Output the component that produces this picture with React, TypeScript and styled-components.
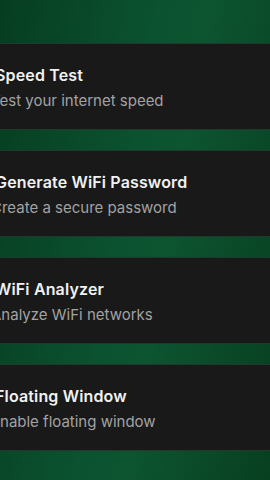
import React, { FC } from "react";
import styled, { createGlobalStyle } from "styled-components";

const GlobalStyle = createGlobalStyle`
  html, body {
    margin: 0;
    padding: 0;
    height: 100%;
  }
  body {
    font-family: Inter, "Noto Sans", "Liberation Sans", sans-serif;
    background: #0a4a27;
    overflow: hidden;
  }
  #root {
    height: 100%;
  }
`;

const tools = [
  { title: "Speed Test", subtitle: "Test your internet speed" },
  { title: "Generate WiFi Password", subtitle: "Create a secure password" },
  { title: "WiFi Analyzer", subtitle: "Analyze WiFi networks" },
  { title: "Floating Window", subtitle: "Enable floating window" },
];

const App: FC = () => {
  return (
    <>
      <GlobalStyle />
      <Screen>
        <ToolList>
          {tools.map((tool) => (
            <ToolCard key={tool.title}>
              <ToolTitle>{tool.title}</ToolTitle>
              <ToolSubtitle>{tool.subtitle}</ToolSubtitle>
            </ToolCard>
          ))}
        </ToolList>
      </Screen>
    </>
  );
};

const Screen = styled.div`
  height: 100%;
  width: 100%;
  overflow: hidden;
  background: linear-gradient(
    100deg,
    #063d20 0%,
    #0b5230 45%,
    #0d5431 60%,
    #073f21 100%
  );
`;

const ToolList = styled.div`
  display: flex;
  flex-direction: column;
  gap: 20px;
  padding-top: 43px;
  margin-left: -30px;
  width: 330px;
`;

const ToolCard = styled.div`
  display: flex;
  flex-direction: column;
  height: 87px;
  box-sizing: border-box;
  padding: 22px 24px 0 25px;
  background: #19191a;
  border-top: 1px solid #1f3a2a;
  border-bottom: 1px solid #1f3a2a;
  border-radius: 12px;
`;

const ToolTitle = styled.div`
  font-size: 16px;
  line-height: 20px;
  font-weight: 600;
  letter-spacing: 0.15px;
  color: #f1f1f1;
  margin-top: -1px;
`;

const ToolSubtitle = styled.div`
  font-size: 15px;
  line-height: 20px;
  font-weight: 400;
  color: #a2a2a2;
  margin-top: 6px;
  margin-left: -4px;
`;

export default App;
